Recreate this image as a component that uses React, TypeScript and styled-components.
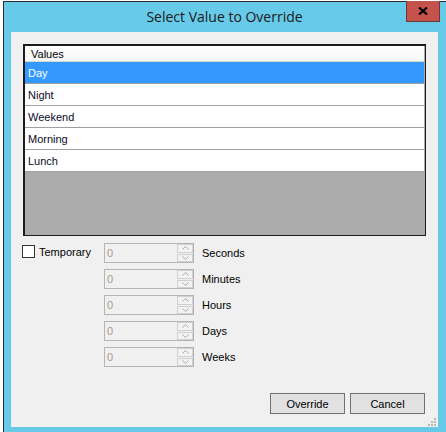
import * as React from "react";
import styled, { createGlobalStyle } from "styled-components";

const GlobalStyle = createGlobalStyle`
  html, body {
    margin: 0;
    padding: 0;
    overflow: hidden;
    background: #ffffff;
  }
`;

const Desktop = styled.div`
  display: flex;
  height: 432px;
  box-sizing: border-box;
  padding: 1px 0 0 3px;
  overflow: hidden;
  font-family: "Liberation Sans", Arial, sans-serif;
`;

const Window = styled.div`
  display: flex;
  flex-direction: column;
  flex-shrink: 0;
  border-left: 1px solid #2b2b2b;
  border-top: 1px solid #2b2b2b;
  background: #68cae9;
  padding: 0 8px 0 7px;
`;

const TitleBar = styled.div`
  display: grid;
  grid-template-columns: 1fr auto 1fr;
  align-items: start;
  height: 30px;
`;

const Title = styled.div`
  grid-column: 2;
  align-self: center;
  font-family: "Open Sans", "Noto Sans", sans-serif;
  font-size: 14px;
  color: #1a1a1a;
  padding-bottom: 1px;
`;

const CloseButton = styled.div`
  grid-column: 3;
  justify-self: end;
  display: flex;
  align-items: center;
  justify-content: center;
  width: 34px;
  height: 21px;
  box-sizing: border-box;
  margin: -1px -2px 0 0;
  background: #c6524c;
  border: 1px solid #6b3a38;
  border-top: none;
`;

const Client = styled.div`
  position: relative;
  display: flex;
  flex-direction: column;
  width: 427px;
  height: 395px;
  box-sizing: border-box;
  padding: 12px 12px 13px 12px;
  background: #f0f0f0;
  font-size: 11px;
`;

const ListBox = styled.div`
  display: flex;
  flex-direction: column;
  height: 192px;
  box-sizing: border-box;
  border-style: solid;
  border-color: #1c1c1c;
  border-width: 2px 1px 1px 2px;
  background: #ababab;
  padding-right: 1px;
`;

const HeaderCell = styled.div`
  height: 16px;
  box-sizing: border-box;
  display: flex;
  align-items: center;
  padding-left: 6px;
  background: linear-gradient(#ffffff, #f7f7f7);
  border-bottom: 1px solid #d5d5d5;
  color: #000;
`;

const Row = styled.div<{ $selected?: boolean }>`
  height: 22px;
  box-sizing: border-box;
  display: flex;
  align-items: center;
  padding-left: 3px;
  border-bottom: 1px solid #a0a0a0;
  background: ${(p) => (p.$selected ? "#3399ff" : "#ffffff")};
  color: ${(p) => (p.$selected ? "#ffffff" : "#0a0a28")};
`;

const Options = styled.div`
  display: grid;
  grid-template-columns: 73px 90px auto;
  column-gap: 8px;
  row-gap: 6px;
  margin-top: 7px;
`;

const CheckWrap = styled.label`
  display: flex;
  align-items: center;
  gap: 4px;
  margin: 2px 0 0 -1px;
  align-self: start;
  color: #000;
`;

const CheckBox = styled.span`
  width: 13px;
  height: 13px;
  box-sizing: border-box;
  border: 1px solid #333333;
  background: #ffffff;
`;

const SpinBox = styled.div`
  grid-column: 2;
  display: flex;
  height: 20px;
  box-sizing: border-box;
  border: 1px solid #b4b4b4;
  background: #f0f0f0;
`;

const SpinValue = styled.div`
  flex: 1;
  display: flex;
  align-items: center;
  padding-left: 2px;
  color: #a39a8c;
`;

const SpinButtons = styled.div`
  display: flex;
  flex-direction: column;
  width: 16px;
  gap: 1px;
`;

const SpinButton = styled.div`
  flex: 1;
  display: flex;
  align-items: center;
  justify-content: center;
  background: #f2f2f2;
  border: 1px solid #d0d0d0;
`;

const UnitLabel = styled.div`
  grid-column: 3;
  display: flex;
  align-items: center;
  color: #000;
`;

const ButtonRow = styled.div`
  margin-top: auto;
  display: flex;
  justify-content: flex-end;
  gap: 5px;
  padding-right: 1px;
`;

const Button = styled.div`
  width: 75px;
  height: 21px;
  box-sizing: border-box;
  display: flex;
  align-items: center;
  justify-content: center;
  border: 1px solid #707070;
  background: #e1e1e1;
  color: #000;
`;

const Grip = styled.svg`
  position: absolute;
  right: 2px;
  bottom: 1px;
`;

const Chevron = ({ up }: { up?: boolean }) => (
  <svg width="7" height="4" viewBox="0 0 7 4">
    <polyline
      points={up ? "0.5,3.5 3.5,0.5 6.5,3.5" : "0.5,0.5 3.5,3.5 6.5,0.5"}
      fill="none"
      stroke="#a8a8a8"
      strokeWidth="1"
    />
  </svg>
);

const units = ["Seconds", "Minutes", "Hours", "Days", "Weeks"];
const values = ["Day", "Night", "Weekend", "Morning", "Lunch"];

export default function App() {
  return (
    <>
      <GlobalStyle />
      <Desktop>
        <Window>
          <TitleBar>
            <Title>Select Value to Override</Title>
            <CloseButton>
              <svg width="10" height="8" viewBox="0 0 10 8">
                <path d="M1 0.5 L9 7.5 M9 0.5 L1 7.5" stroke="#000" strokeWidth="2.2" />
              </svg>
            </CloseButton>
          </TitleBar>
          <Client>
            <ListBox>
              <HeaderCell>Values</HeaderCell>
              {values.map((v, i) => (
                <Row key={v} $selected={i === 0}>
                  {v}
                </Row>
              ))}
            </ListBox>
            <Options>
              {units.map((u, i) => (
                <React.Fragment key={u}>
                  {i === 0 ? (
                    <CheckWrap>
                      <CheckBox />
                      Temporary
                    </CheckWrap>
                  ) : null}
                  <SpinBox>
                    <SpinValue>0</SpinValue>
                    <SpinButtons>
                      <SpinButton>
                        <Chevron up />
                      </SpinButton>
                      <SpinButton>
                        <Chevron />
                      </SpinButton>
                    </SpinButtons>
                  </SpinBox>
                  <UnitLabel>{u}</UnitLabel>
                </React.Fragment>
              ))}
            </Options>
            <ButtonRow>
              <Button>Override</Button>
              <Button>Cancel</Button>
            </ButtonRow>
            <Grip width="9" height="9" viewBox="0 0 9 9">
              {[
                [7, 1],
                [4, 4],
                [7, 4],
                [1, 7],
                [4, 7],
                [7, 7],
              ].map(([x, y]) => (
                <rect key={`${x}-${y}`} x={x} y={y} width="2" height="2" fill="#b8b8b8" />
              ))}
            </Grip>
          </Client>
        </Window>
      </Desktop>
    </>
  );
}
